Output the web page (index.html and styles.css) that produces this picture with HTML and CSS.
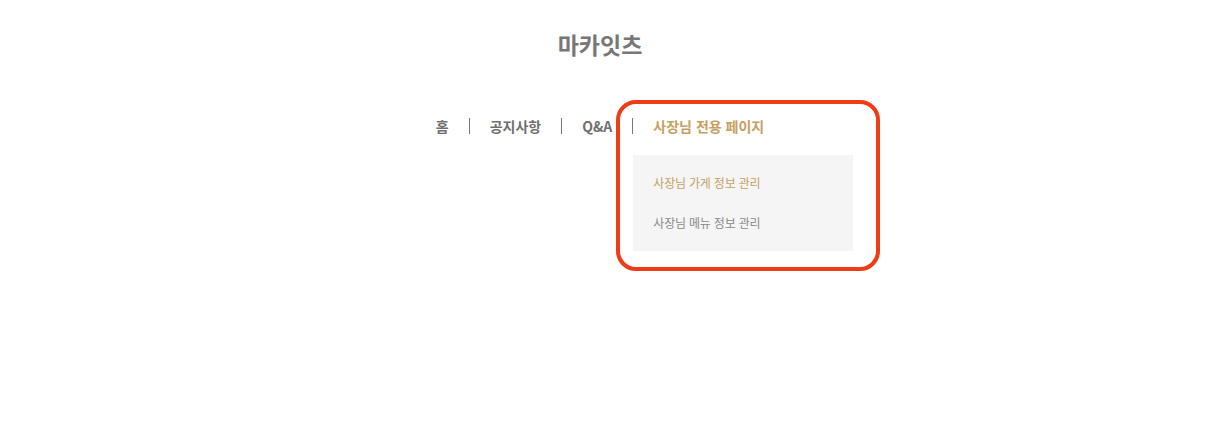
FILE: index.html
```html
<!DOCTYPE html>
<html lang="ko">
<head>
<meta charset="utf-8">
<title>마카잇츠</title>
<link rel="stylesheet" href="styles.css">
</head>
<body>
<div class="wrap">
  <header class="header">
    <h1 class="logo">마카잇츠</h1>
    <nav class="gnb">
      <ul class="gnb-list">
        <li class="gnb-item"><a href="#">홈</a></li>
        <li class="gnb-item"><a href="#">공지사항</a></li>
        <li class="gnb-item"><a href="#">Q&amp;A</a></li>
        <li class="gnb-item gnb-item--active">
          <a href="#">사장님 전용 페이지</a>
          <ul class="sub">
            <li class="sub-item sub-item--active"><a href="#">사장님 가게 정보 관리</a></li>
            <li class="sub-item"><a href="#">사장님 메뉴 정보 관리</a></li>
          </ul>
          <span class="highlight"></span>
        </li>
      </ul>
    </nav>
  </header>
</div>
</body>
</html>
```

FILE: styles.css
```css
* { box-sizing: border-box; }
html, body { margin: 0; padding: 0; background: #fff; }
html { height: 100%; }
body {
  min-height: 426px;
  font-family: "Noto Sans CJK KR", "Noto Sans", sans-serif;
  color: #6f6f6f;
}
a { text-decoration: none; color: inherit; }
ul { list-style: none; margin: 0; padding: 0; }

.wrap { width: 1200px; min-height: 426px; }

.header {
  display: flex;
  flex-direction: column;
  align-items: center;
  padding-top: 29px;
}

.logo {
  margin: 0;
  font-size: 23px;
  line-height: 30px;
  font-weight: 700;
  color: #777;
  letter-spacing: 0;
}

.gnb { margin-top: 59px; }

.gnb-list { display: flex; }

.gnb-item {
  position: relative;
  padding: 0 20px;
  font-size: 14px;
  line-height: 16px;
  font-weight: 700;
  letter-spacing: 0;
  color: #6f6f6f;
}
.gnb-item + .gnb-item { border-left: 1px solid #777; }
.gnb-item--active { color: #c6a060; }

.sub {
  position: absolute;
  left: 0;
  top: calc(100% + 21px);
  width: 220px;
  padding: 8px 20px;
  background: #f5f5f5;
}
.sub-item {
  font-size: 12px;
  line-height: 40px;
  font-weight: 400;
  letter-spacing: -0.2px;
  color: #8a8a8a;
  white-space: nowrap;
}
.sub-item--active { color: #c6a060; }

.highlight {
  position: absolute;
  left: -17px;
  top: -18px;
  width: 264px;
  height: 171px;
  border: 4px solid #ee3c17;
  border-radius: 20px;
  pointer-events: none;
}
```
